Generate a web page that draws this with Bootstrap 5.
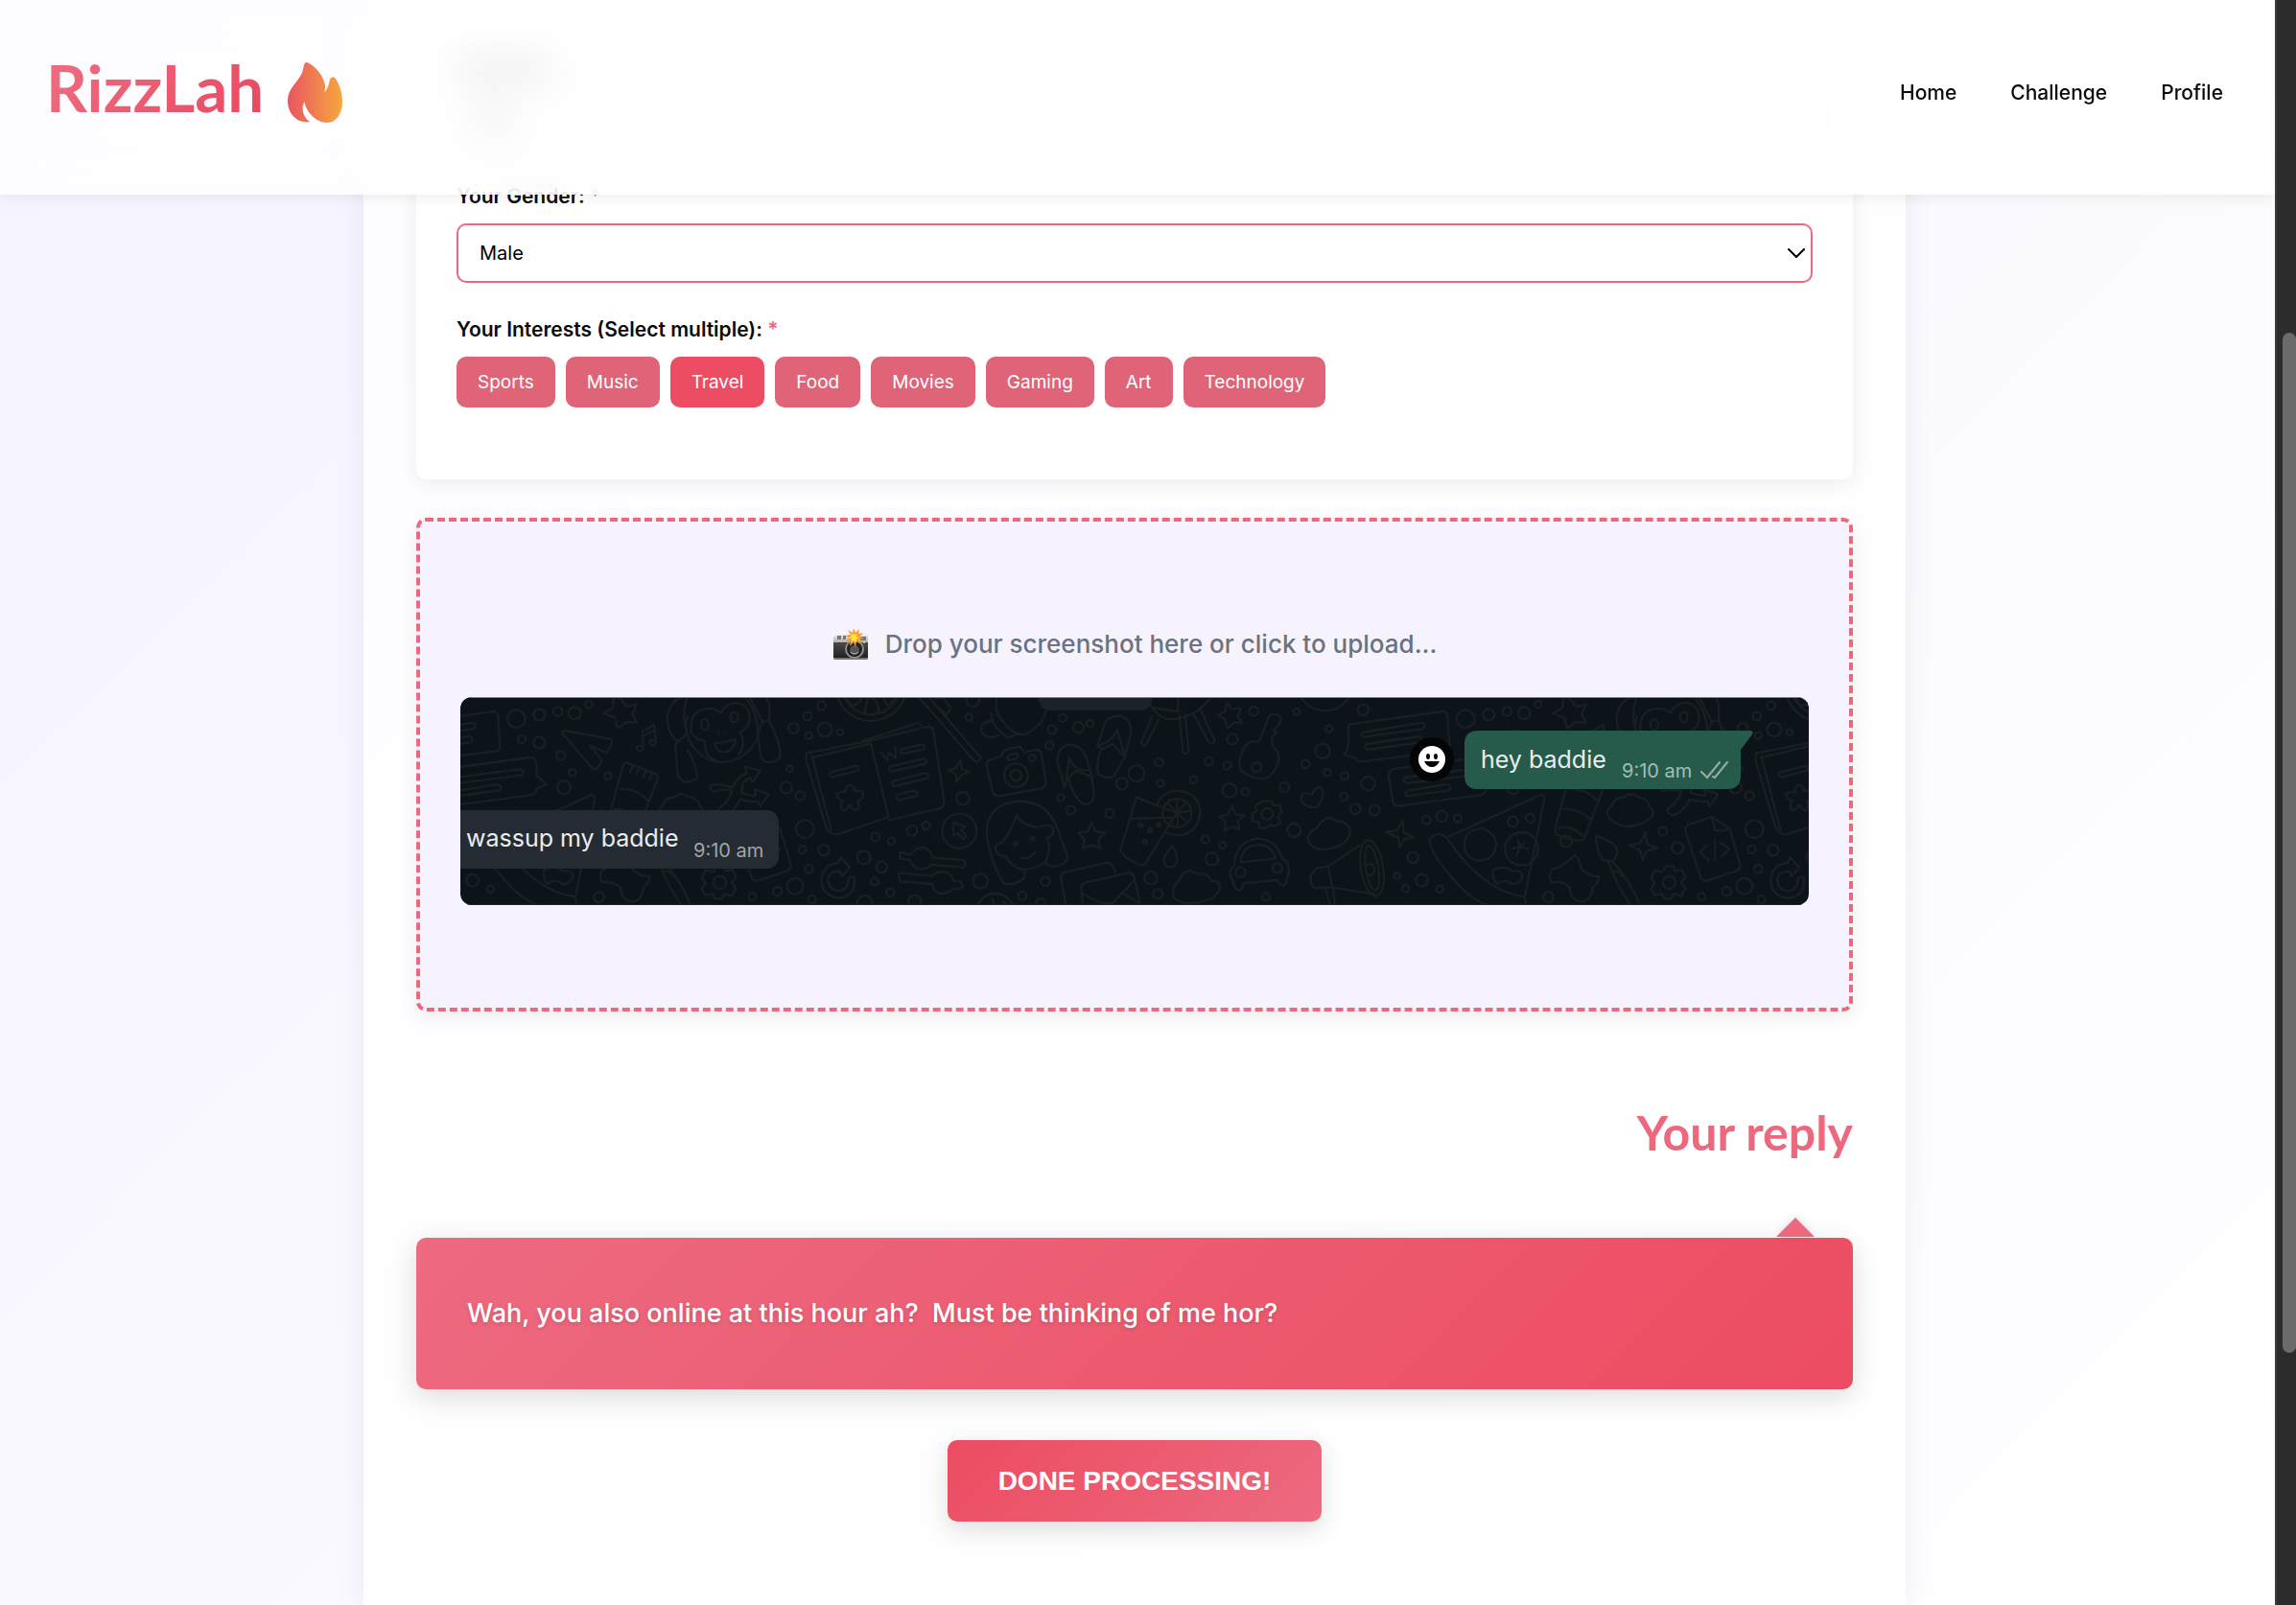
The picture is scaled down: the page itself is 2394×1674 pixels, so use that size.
<!DOCTYPE html>
<html lang="en">
<head>
<meta charset="utf-8">
<meta name="viewport" content="width=device-width, initial-scale=1">
<title>RizzLah</title>
<link href="https://cdn.jsdelivr.net/npm/bootstrap@5.3.0/dist/css/bootstrap.min.css" rel="stylesheet">
<style>
  :root { --rose: #ed687d; --rose-deep: #ec4d63; --slate: #6b7280; }
  body { font-family: Inter, "Liberation Sans", sans-serif; font-size: 21px; line-height: 32px; color: #0b0b0b; background: #fff; overflow: hidden; }
  .backdrop { background: linear-gradient(135deg, #f5f3ff 0%, #ffffff 100%); }
  .site-nav { height: 203px; right: 22px; padding: 0 54px 10px 48px; background: rgba(255,255,255,.82); backdrop-filter: blur(20px); box-shadow: 0 2px 14px rgba(0,0,0,.08); }
  .brand-name { font: 700 67px/76px Lato, sans-serif; padding-bottom: 12px; background: linear-gradient(135deg, #ee6f84, #e9465d); -webkit-background-clip: text; background-clip: text; color: transparent; }
  .brand-link { gap: 25px; }
  .menu { gap: 56px; }
  .menu a { color: #0b0b0b; font-weight: 500; }
  .stage { padding-right: 6px; }
  .panel { width: 100%; max-width: 1608px; padding: 0 55px; background: rgba(255,255,255,.78); box-shadow: 0 0 30px rgba(20,20,60,.07); }
  .profile-box { padding: 58px 42px 42px; background: rgba(255,255,255,.8); border-radius: 0 0 10px 10px; box-shadow: 0 4px 20px rgba(0,0,0,.07); }
  .field { margin-bottom: 33px; }
  .field-title { font-weight: 600; margin-bottom: 12px; display: block; }
  .star { color: var(--rose); }
  .ghost-title { width: 98px; height: 24px; margin-bottom: 12px; background: rgba(0,0,0,.42); }
  .ghost-input { height: 62px; border: 2px solid var(--rose); border-radius: 10px; padding: 14px 22px; }
  .ghost-value { width: 30px; height: 24px; background: rgba(0,0,0,.45); }
  .gender { height: 62px; border: 2px solid var(--rose); border-radius: 10px; padding: 0 22px; font-size: 20px; color: #000; background-color: #fff; background-position: right 6px center; background-size: 18px 10px; background-image: url("data:image/svg+xml,%3Csvg xmlns='http://www.w3.org/2000/svg' viewBox='0 0 18 10'%3E%3Cpath fill='none' stroke='%23000' stroke-width='2' stroke-linecap='round' stroke-linejoin='round' d='M1 1l8 8 8-8'/%3E%3C/svg%3E"); }
  .chips { gap: 11px; }
  .chip { height: 53px; padding: 0 22px; font-size: 19px; color: #fff; background: #df6477; border: 0; border-radius: 10px; }
  .chip.chosen { background: var(--rose-deep); }
  .drop { margin-top: 40px; padding: 107px 42px; border: 4px dashed var(--rose); border-radius: 10px; background: #f6f3fe; box-shadow: 0 6px 20px rgba(0,0,0,.07); cursor: pointer; }
  .drop-hint { font-size: 26px; line-height: 42px; font-weight: 500; color: var(--slate); gap: 17px; margin-bottom: 34px; }
  .shot { border-radius: 12px; background: #0c1319; }
  .reply-title { font: 700 50px/60px Lato, sans-serif; color: var(--rose); margin: 96px 0 80px; }
  .reply { padding: 53px; font-size: 27px; line-height: 52px; font-weight: 500; color: #fff; white-space: pre-wrap; border-radius: 10px; background: linear-gradient(135deg, #ed6a80, #ec4c61); box-shadow: 0 8px 30px rgba(0,0,0,.14); text-shadow: 0 2px 4px rgba(0,0,0,.14); }
  .reply::before { content: ""; position: absolute; top: -21px; right: 40px; border: 20px solid transparent; border-top: 0; border-bottom-color: var(--rose); filter: drop-shadow(0 -2px 4px rgba(0,0,0,.1)); }
  .done { margin-top: 53px; height: 85px; padding: 0 53px; font: 700 28px/40px "Liberation Sans", Arial, sans-serif; color: #fff; border: 0; border-radius: 10px; background: linear-gradient(135deg, #ec4c61, #ed6a80); box-shadow: 0 8px 26px rgba(0,0,0,.13); }
  .track { width: 22px; background: #2c2c2c; border-left: 2px solid #3c3c3c; padding: 347px 0 0 6px; z-index: 1040; }
  .thumb { height: 1064px; background: #6b6b6b; border-radius: 8px; }
</style>
</head>
<body>
<div class="d-flex vh-100">
  <div class="backdrop flex-grow-1">
    <header class="site-nav position-fixed top-0 start-0 z-3 d-flex align-items-center justify-content-between">
      <a href="#" class="brand-link d-flex align-items-center text-decoration-none">
        <span class="brand-name">RizzLah</span>
        <svg width="57" height="63" viewBox="0 0 57 63" aria-hidden="true">
          <defs><linearGradient id="flame"><stop offset="0" stop-color="#ea5560"/><stop offset="1" stop-color="#f5a83f"/></linearGradient></defs>
          <path fill="url(#flame)" d="M20 0C30 4 38 16 39 24C39.500 27 38.500 29 38.500 31C42 28 43 22 44 18C45 15 48 15 50 17C54 23 57 32 57 41C57 54 50 63 41 63C30 63 19 52 17.500 41C14 47 15 56 23 62C9 64 0 53 0 40C0 27 10 22 15 11C17 6 16 0 20 0Z"/>
        </svg>
      </a>
      <nav class="menu d-flex">
        <a href="#" class="text-decoration-none">Home</a>
        <a href="#" class="text-decoration-none">Challenge</a>
        <a href="#" class="text-decoration-none">Profile</a>
      </nav>
    </header>

    <main class="stage d-flex justify-content-center">
      <div class="panel vh-100">
        <form class="profile-box">
          <div class="field" aria-hidden="true">
            <div class="ghost-title"></div>
            <div class="ghost-input"><div class="ghost-value"></div></div>
          </div>
          <div class="field">
            <label class="field-title" for="gender">Your Gender: <span class="star">*</span></label>
            <select id="gender" class="form-select gender"><option>Male</option></select>
          </div>
          <div class="field">
            <span class="field-title" id="interests">Your Interests (Select multiple): <span class="star">*</span></span>
            <div class="chips d-flex flex-wrap" role="group" aria-labelledby="interests">
              <button type="button" class="chip">Sports</button>
              <button type="button" class="chip">Music</button>
              <button type="button" class="chip chosen" aria-pressed="true">Travel</button>
              <button type="button" class="chip">Food</button>
              <button type="button" class="chip">Movies</button>
              <button type="button" class="chip">Gaming</button>
              <button type="button" class="chip">Art</button>
              <button type="button" class="chip">Technology</button>
            </div>
          </div>
        </form>

        <label class="drop d-block" for="shot">
          <span class="drop-hint d-flex justify-content-center align-items-center">
            <svg width="38" height="34" viewBox="0 0 38 34" aria-hidden="true">
              <defs>
                <linearGradient id="top" x2="0" y2="1"><stop offset="0" stop-color="#e8e8e6"/><stop offset="1" stop-color="#a9a9a6"/></linearGradient>
                <linearGradient id="leather" x2="0" y2="1"><stop offset="0" stop-color="#4a4a4a"/><stop offset="1" stop-color="#1c1c1c"/></linearGradient>
              </defs>
              <path fill="url(#top)" d="M1 9h2V7h32q2 0 2 2v7H1z"/>
              <path fill="#777" d="M5 8h4v4H5zM11 8h3v4h-3zM29 9h6v4h-6z"/>
              <path fill="url(#leather)" d="M1 15h36v16q0 2-2 2H3q-2 0-2-2z"/>
              <path fill="#c9c9c9" d="M1 31h36v1q0 1-2 1H3q-2 0-2-1z" opacity=".5"/>
              <circle cx="23" cy="22" r="10" fill="#8c8c8c"/><circle cx="23" cy="22" r="8" fill="#222"/><circle cx="23" cy="23" r="5" fill="#555"/><path d="M19 25q4 4 8 0" stroke="#bbb" fill="none"/>
              <path fill="#f59a23" d="M22 0l2 5 4-4-1 5 5-1-4 4 5 2-6 1 3 5-5-3-1 6-2-5-4 4 1-6-5 1 4-4-5-2 6-1-3-5 5 3z"/>
              <path fill="#ffe04a" d="M22 4l1 3 3-1-1 3 3 1-3 2 0 3-3-2-3 2 1-4-3-1 3-2-1-3 3 2z"/>
              <circle cx="33" cy="15" r="1" fill="#ffd94a"/>
            </svg>
            <span>Drop your screenshot here or click to upload...</span>
          </span>
          <svg class="shot d-block w-100" viewBox="0 0 1406 217" role="img" aria-label="Chat screenshot" font-family="Inter, 'Liberation Sans', sans-serif">
            <defs>
              <g id="tile">
                <path d="M-185 100L105 60Q116 60 118 75L124 165Q124 182 108 185L-160 218L-172 205L-205 195Q-186 175 -192 120Q-194 104 -185 100ZM-145 125L40 95Q55 105 40 115L-145 140Q-155 132 -145 125ZM-135 162L30 138Q45 145 32 157L-135 180Q-145 170 -135 162Z"/>
                <path d="M-50 240L220 204Q232 204 236 215L240 262L270 288L240 302Q235 320 220 322L-35 356Q-50 356 -53 340L-66 262Q-66 245 -50 240ZM-15 267L185 241Q205 245 192 260L-10 285Q-25 278 -15 267ZM-8 308L115 288Q135 294 122 307L-8 325Q-20 318 -8 308Z"/>
                <path d="M500 18L520 45L552 38L538 68L552 95L520 93L492 113L484 80L448 66L478 48L480 15Z"/>
                <path d="M325 120L470 146Q478 150 472 165L457 190L405 165L445 215L426 240Q418 245 410 235L320 130Q318 120 325 120Z"/>
                <path d="M572 168L570 122L606 102L612 155M570 138L608 118"/><ellipse cx="562" cy="175" rx="10" ry="8"/><ellipse cx="602" cy="158" rx="9" ry="8"/>
                <path d="M700 15Q660 20 648 70Q645 120 672 148L684 152L710 130Q690 80 708 18M684 152L672 165L680 260Q700 295 740 270Q745 240 710 180M905 15L945 92L965 88Q975 40 950 0M945 92L930 130L940 205Q965 235 1000 205Q1005 160 965 88"/>
                <path d="M710 75Q695 130 735 180Q780 225 830 218Q900 210 930 140Q935 70 895 22M815 65Q790 40 745 58Q715 80 722 125Q735 150 765 152Q760 200 800 215M815 65Q830 35 865 32Q905 40 905 80Q905 110 875 125Q895 165 870 195M795 160Q830 158 862 147Q855 185 825 188Q800 185 795 160Z"/>
                <ellipse cx="765" cy="101" rx="12" ry="17"/><ellipse cx="857" cy="78" rx="12" ry="16"/><path d="M808 127v1M826 125v1"/>
                <path d="M520 220L612 256Q620 262 616 274L545 460Q530 472 465 448Q452 440 455 425L508 232Q512 220 520 220ZM540 230L530 250M560 238L550 258M580 246L570 266M600 254L590 274M500 303Q550 300 585 338M480 365Q530 365 565 397M465 425Q510 415 540 450"/><circle cx="490" cy="466" r="18"/>
                <path d="M785 290Q820 285 850 300Q870 260 895 255L890 233L938 246L915 280L905 268Q880 275 880 315Q905 325 925 322L920 303L965 320L938 357L930 340Q900 345 875 335Q855 380 820 385Q800 375 810 362Q840 345 850 308Q820 302 790 310Q775 300 785 290Z"/>
                <path d="M630 400Q605 375 632 355Q645 325 670 330Q690 308 715 328Q745 330 750 358Q775 380 745 400Q680 440 630 400Z"/>
                <path d="M1085 190L1282 152L1340 390L1180 445Q1155 445 1145 425L1082 215Q1080 195 1085 190ZM1098 205L1285 160M1100 200L1160 432M1282 152L1460 108Q1478 108 1480 120L1514 345Q1512 362 1495 365L1340 400M1260 152L1435 95L1445 108M1160 250L1240 230Q1252 236 1242 245L1165 266Q1150 260 1160 250ZM1315 188L1335 212L1340 190L1362 206L1360 172M1378 180L1445 163Q1460 170 1448 180L1382 192Q1370 188 1378 180ZM1345 232L1450 208Q1465 214 1452 225L1348 248Q1335 242 1345 232ZM1355 278L1458 252Q1472 260 1460 270L1358 294Q1342 288 1355 278ZM1368 320L1420 308Q1438 314 1425 325L1372 338Q1358 330 1368 320Z"/>
                <path d="M1218 290Q1232 292 1232 308Q1262 305 1260 322Q1258 338 1242 340Q1255 365 1235 370Q1225 365 1218 352Q1205 378 1192 365Q1188 350 1196 340Q1172 330 1178 318Q1190 308 1206 312Q1206 292 1218 290Z"/>
                <path d="M115 455L408 322Q422 320 420 340L360 640Q230 625 115 455ZM115 455Q85 430 62 460Q60 500 150 600Q230 690 365 690L360 640"/>
                <circle cx="220" cy="477" r="50"/><circle cx="350" cy="490" r="52"/><path d="M340 465L345 485L320 488M345 485L335 510M345 485L370 490M345 485L360 470M262 555Q300 540 320 560Q350 555 352 575Q350 600 320 600Q295 580 272 600Q255 580 262 555Z"/>
                <path d="M445 555Q490 540 515 510Q530 515 535 550Q560 580 592 575Q590 600 572 610Q570 650 540 655Q505 655 500 610Q480 590 445 595Q430 580 445 555Z"/>
                <path d="M582 450Q650 470 650 500Q645 520 635 530L605 525Q585 505 582 450ZM635 530Q690 590 720 665M622 532Q650 610 690 665M640 560Q655 560 665 575"/>
                <path d="M870 415L945 390L1000 425L1034 540Q1034 555 1020 560L930 590Q915 592 910 578L862 435Q862 420 870 415ZM945 390L955 430Q975 440 1000 425M930 480L908 500L935 525M955 462L955 525M970 470L1000 490L975 515"/>
                <path d="M798 545l28 0 5 15 20-5 12 25-14 15 14 18-14 24-22-6-10 16-22-2-6-14-24 4-10-22 12-16-12-16 12-24 24 6z"/><circle cx="812" cy="595" r="20"/>
                <path d="M1182 535L1190 517L1218 548L1195 575L1188 560Q1150 560 1150 590Q1155 622 1185 622Q1215 618 1215 580L1232 578Q1240 640 1182 644Q1125 635 1130 580Q1140 535 1182 535Z"/>
                <path d="M-22 402L-18 440L14 454L-18 460L-32 486L-36 454L-76 438L-40 432ZM738 437L742 475L776 488L742 496L728 526L720 494L684 478L722 472Z"/>
                <circle cx="1285" cy="-20" r="110"/><circle cx="1285" cy="-20" r="90"/><path d="M1200 10L1255 10Q1250 45 1222 40ZM1275 15Q1305 15 1310 60Q1285 80 1265 62ZM1320 10L1360 12Q1350 40 1335 40Z"/>
                <g id="dots"><circle cx="175" cy="83" r="28"/><circle cx="247" cy="70" r="18"/><circle cx="305" cy="60" r="14"/><circle cx="358" cy="65" r="19"/><circle cx="402" cy="38" r="11"/><circle cx="192" cy="147" r="12"/><circle cx="247" cy="158" r="18"/><circle cx="314" cy="198" r="14"/><circle cx="350" cy="252" r="11"/><circle cx="324" cy="298" r="21"/><circle cx="462" cy="262" r="11"/><circle cx="1042" cy="113" r="16"/><circle cx="1086" cy="75" r="13"/><circle cx="1130" cy="42" r="13"/><circle cx="1140" cy="117" r="22"/><circle cx="1188" cy="125" r="10"/><circle cx="1090" cy="136" r="11"/><circle cx="1030" cy="239" r="10"/><circle cx="1019" cy="298" r="18"/><circle cx="1063" cy="324" r="14"/><circle cx="1078" cy="428" r="28"/><circle cx="1070" cy="492" r="12"/><circle cx="1137" cy="494" r="17"/><circle cx="1090" cy="553" r="13"/><circle cx="1047" cy="607" r="25"/><circle cx="992" cy="623" r="14"/><circle cx="913" cy="640" r="12"/><circle cx="1100" cy="648" r="12"/><circle cx="1298" cy="453" r="13"/><circle cx="1348" cy="466" r="11"/><circle cx="1413" cy="433" r="16"/><circle cx="1457" cy="417" r="12"/><circle cx="1262" cy="517" r="21"/><circle cx="1318" cy="547" r="17"/><circle cx="1296" cy="592" r="12"/><circle cx="1345" cy="626" r="13"/><circle cx="1265" cy="660" r="24"/><circle cx="1422" cy="655" r="20"/><circle cx="38" cy="588" r="19"/><circle cx="94" cy="616" r="11"/><circle cx="434" cy="641" r="16"/><circle cx="-130" cy="286" r="22"/><circle cx="-170" cy="365" r="16"/><circle cx="-110" cy="369" r="16"/><circle cx="52" cy="400" r="13"/><circle cx="100" cy="388" r="17"/><circle cx="150" cy="394" r="12"/><circle cx="10" cy="517" r="17"/><circle cx="-40" cy="574" r="10"/><circle cx="-12" cy="614" r="11"/><circle cx="322" cy="405" r="16"/><circle cx="377" cy="394" r="14"/><circle cx="792" cy="435" r="13"/><circle cx="838" cy="487" r="18"/></g>
              </g>
              <g id="middle">
                <path d="M50 10L228 215Q245 222 248 205L85 15M105 20L130 15L155 50L140 70L118 50"/>
                <path d="M300 15Q285 60 320 95Q350 135 385 132Q440 110 455 50M280 65Q280 105 330 140Q350 142 360 130M278 90Q245 95 250 125Q270 150 305 135"/>
                <path d="M275 212L312 200Q318 178 340 176L370 170L385 188L420 180Q435 180 438 195L452 280Q450 298 435 302L305 325Q288 325 285 310L266 230Q266 216 275 212ZM335 197L360 191Q370 200 360 207L338 214Q325 205 335 197Z"/><circle cx="358" cy="260" r="37"/><circle cx="358" cy="260" r="17"/><circle cx="409" cy="206" r="10"/>
                <path d="M510 292Q500 260 488 220Q485 170 525 163Q565 165 580 210L595 262L602 320Q598 355 572 350Q540 340 522 265L510 298ZM525 205L515 275L545 245L595 265M525 205Q535 245 590 245"/>
                <path d="M612 170Q628 130 635 95Q655 70 690 75Q725 90 715 140L697 205L665 262Q640 275 615 255Q608 220 625 175ZM675 117Q665 150 612 170M675 117L700 205L660 162L625 180"/>
                <path d="M780 40Q800 80 840 85Q920 80 965 20M780 48L865 60L865 15M805 85L765 165Q755 170 750 155L785 75M870 75L880 185Q890 200 898 185L888 70M912 65L960 155Q975 168 980 152L935 55"/>
                <path d="M1018 32L1032 52L1062 50L1052 75L1066 95L1040 95L1020 112L1012 85L988 70L1012 60ZM1035 355L1045 382L1072 385L1052 405L1058 430L1035 420L1010 432L1015 405L995 388L1022 382ZM595 408L606 435L638 440L615 460L622 488L595 478L566 488L572 460L553 440L584 435Z"/>
                <path d="M1118 155L1150 75Q1160 60 1185 75Q1192 85 1178 105L1165 120L1172 125L1158 145L1160 170Q1185 185 1180 215Q1165 265 1130 272Q1080 265 1060 240Q1050 215 1072 175Q1085 150 1118 155Z"/><circle cx="1111" cy="235" r="15"/>
                <path d="M735 328L860 378L760 542Q710 535 685 495ZM715 396L850 392M800 350Q815 310 865 308Q930 315 935 375Q925 445 865 448Q840 448 825 435"/><circle cx="862" cy="378" r="45"/><path d="M862 378L862 335M862 378L890 345M862 378L905 370M862 378L895 408M862 378L865 420M862 378L838 412M862 378L832 345"/><circle cx="749" cy="416" r="6"/><circle cx="778" cy="432" r="6"/><circle cx="804" cy="415" r="6"/><circle cx="762" cy="467" r="6"/>
                <path d="M848 480Q865 510 862 530Q850 555 828 545Q815 530 825 510Z"/>
                <path d="M322 600Q295 570 270 470Q255 390 310 355Q380 325 440 360Q480 390 500 460L520 515Q515 540 475 545Q455 545 452 530Q470 490 455 455Q480 450 474 425Q460 410 430 422Q380 420 360 385Q345 430 315 470Q290 475 294 490Q300 515 325 512Q345 550 385 555Q425 550 452 530M385 555L385 580Q360 605 322 600M375 518Q400 525 418 502"/><circle cx="357" cy="475" r="6"/><circle cx="410" cy="457" r="6"/>
                <circle cx="181" cy="434" r="54"/><path d="M162 408L162 450L175 440L195 460L203 450L186 430L200 420Z"/>
                <path d="M185 212L188 240L213 250L188 258L172 282L170 256L145 243L170 238ZM-5 500L30 508Q45 480 75 488Q95 500 98 518L192 525Q210 538 192 548L95 540Q70 560 45 550Q30 540 28 525L-5 520ZM-10 565L95 575Q115 555 145 565Q160 575 162 590Q188 588 192 605Q185 620 160 614Q135 640 110 625Q100 615 95 600L-5 592Z"/>
                <path d="M1250 325Q1260 310 1285 320Q1292 295 1310 298Q1330 320 1300 360Q1265 362 1250 340Z"/>
                <path d="M1130 340l28 0 4 14 22 0 6 22-12 12 8 22-20 10-12-6-16 14-18-4-2-16-20-6 0-22 14-8-6-16z"/><circle cx="1144" cy="381" r="18"/>
                <path d="M1275 470Q1265 440 1300 425Q1320 390 1345 392Q1360 408 1375 404Q1405 415 1404 440Q1395 475 1350 488Q1290 500 1275 470ZM850 640Q845 600 870 590Q875 560 905 558Q920 570 945 568Q965 575 968 590Q1000 590 995 615Q980 655 920 658Q865 665 850 640Z"/>
                <path d="M1062 532Q1062 480 1115 478Q1155 475 1170 520ZM1040 545Q1045 465 1115 458Q1175 462 1190 520Q1215 530 1212 560L1202 600Q1190 615 1175 588L1070 598Q1065 630 1045 615L1028 570Q1028 550 1040 545Z"/><circle cx="1061" cy="564" r="15"/><circle cx="1176" cy="550" r="15"/>
                <path d="M1300 550L1335 545L1435 478M1300 550Q1265 580 1290 612L1345 610L1480 632M1335 545L1348 610M1325 612L1340 662M1350 612L1355 660M1455 540Q1480 530 1480 560Q1475 575 1460 572"/><ellipse cx="1472" cy="550" rx="35" ry="88" transform="rotate(-9 1472 550)"/><ellipse cx="1472" cy="550" rx="20" ry="70" transform="rotate(-9 1472 550)"/>
                <path d="M515 670L498 580Q500 565 515 562L645 533Q660 535 670 565M568 670L562 610Q562 600 580 595L710 565Q725 565 728 580L748 670M565 630L625 660L660 660L728 590M695 630L745 660"/>
                <circle cx="293" cy="690" r="60"/><path d="M285 645l5 25M320 655l15 15"/>
                <circle cx="223" cy="25" r="20"/><circle cx="211" cy="78" r="11"/><circle cx="463" cy="166" r="13"/><circle cx="471" cy="117" r="13"/><circle cx="505" cy="80" r="12"/><circle cx="554" cy="110" r="17"/><circle cx="590" cy="98" r="11"/><circle cx="192" cy="332" r="20"/><circle cx="499" cy="330" r="11"/><circle cx="530" cy="369" r="14"/><circle cx="651" cy="379" r="14"/><circle cx="735" cy="254" r="25"/><circle cx="689" cy="286" r="18"/><circle cx="806" cy="220" r="13"/><circle cx="810" cy="285" r="11"/><circle cx="913" cy="274" r="11"/><circle cx="962" cy="216" r="13"/><circle cx="1019" cy="229" r="12"/><circle cx="1035" cy="147" r="17"/><circle cx="1102" cy="59" r="14"/><circle cx="1026" cy="307" r="22"/><circle cx="1076" cy="311" r="12"/><circle cx="1198" cy="297" r="15"/><circle cx="1236" cy="61" r="10"/><circle cx="1264" cy="225" r="13"/><circle cx="1332" cy="251" r="11"/><circle cx="1387" cy="262" r="12"/><circle cx="1384" cy="326" r="12"/><circle cx="1317" cy="184" r="23"/><circle cx="1337" cy="114" r="11"/><circle cx="1444" cy="55" r="17"/><circle cx="1228" cy="432" r="21"/><circle cx="951" cy="460" r="12"/><circle cx="1005" cy="479" r="11"/><circle cx="972" cy="522" r="20"/><circle cx="780" cy="581" r="20"/><circle cx="802" cy="631" r="15"/><circle cx="247" cy="591" r="23"/><circle cx="450" cy="592" r="14"/><circle cx="378" cy="637" r="13"/><circle cx="435" cy="660" r="15"/><circle cx="1140" cy="640" r="12"/><circle cx="1325" cy="-30" r="88"/>
              </g>
            </defs>
            <g transform="translate(0 -5) scale(.3333)" fill="none" stroke="#1a1f22" stroke-width="7" stroke-linecap="round" stroke-linejoin="round">
              <use href="#tile"/><use href="#tile" x="2970"/><use href="#middle" x="1380"/>
            </g>
            <path fill="#1b2228" d="M602 0H722Q720 14 708 14H616Q604 14 602 0Z"/>
            <path fill="#1f262b" d="M0 216h1406v1H0z"/><path fill="#7d8086" d="M0 0h1406v1H0z"/>
            <path fill="#242b32" d="M0 118H318Q332 118 332 132V165Q332 179 318 179H0Z"/>
            <text x="6" y="156" font-size="25" fill="#e9edef">wassup my baddie</text>
            <text x="243" y="167" font-size="20" fill="#a2a5a7">9:10 am</text>
            <circle cx="1013" cy="65" r="23" fill="#040506"/><circle cx="1013" cy="65" r="14" fill="#fff"/>
            <ellipse cx="1009" cy="62" rx="2" ry="3" fill="#040506"/><ellipse cx="1017" cy="62" rx="2" ry="3" fill="#040506"/><path d="M1005 67h16q-3 6-8 6t-8-6z" fill="#040506"/>
            <path fill="#265b4b" d="M1061 35H1345Q1349 36 1347 39L1335 55V82Q1335 96 1321 96H1061Q1047 96 1047 82V49Q1047 35 1061 35Z"/>
            <text x="1064" y="74" font-size="25" fill="#e9edef">hey baddie</text>
            <text x="1211" y="84" font-size="20" fill="#a3bdb5">9:10 am</text>
            <path d="M1294 78l6 6 13-16M1306 83l2 1 13-16" fill="none" stroke="#92b0a6" stroke-width="2" stroke-linecap="round"/>
          </svg>
          <input type="file" id="shot" class="visually-hidden">
        </label>

        <h2 class="reply-title text-end">Your reply</h2>
        <div class="reply position-relative">Wah, you also online at this hour ah?  Must be thinking of me hor?</div>
        <div class="text-center"><button type="button" class="done">DONE PROCESSING!</button></div>
      </div>
    </main>
  </div>
  <div class="track flex-shrink-0" aria-hidden="true"><div class="thumb"></div></div>
</div>
<script src="https://cdn.jsdelivr.net/npm/bootstrap@5.3.0/dist/js/bootstrap.bundle.min.js"></script>
</body>
</html>
